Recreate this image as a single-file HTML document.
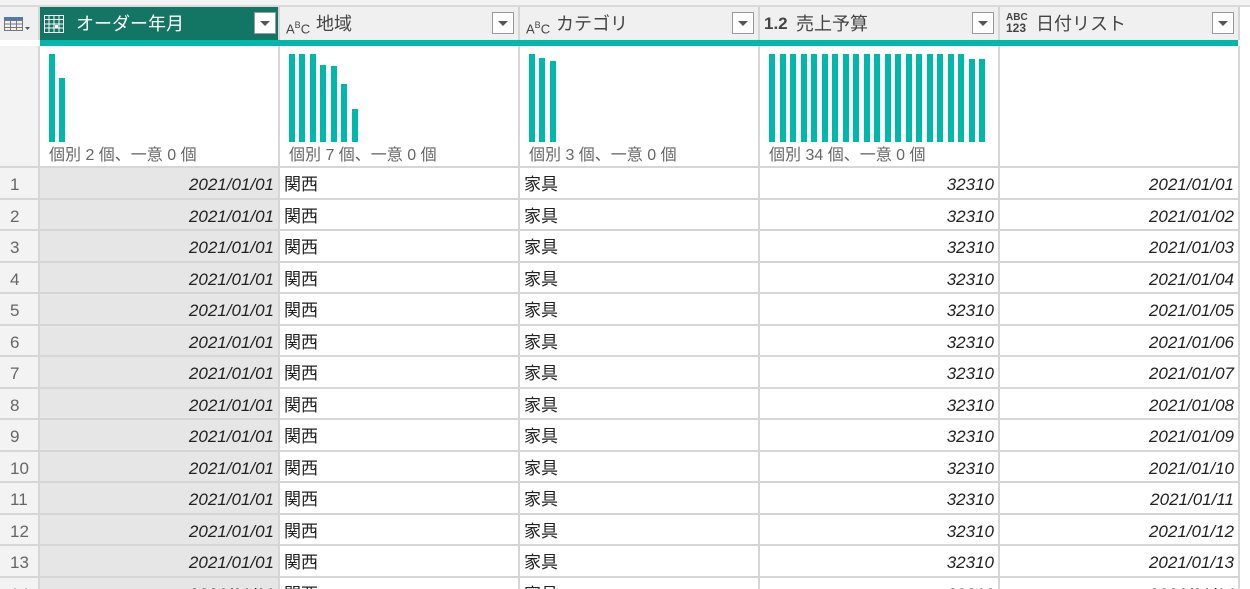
<!DOCTYPE html>
<html><head><meta charset="utf-8"><style>
*{box-sizing:border-box;margin:0;padding:0}
html,body{width:1250px;height:589px;overflow:hidden}
body{background:#fff;font-family:"Segoe UI","Liberation Sans","Noto Sans CJK JP",sans-serif;position:relative}
.top{position:absolute;left:0;top:0;width:1250px;height:7px;background:#f3f3f3;border-bottom:2px solid #dadada}
.hdr{position:absolute;top:7px;left:0;height:33px;display:flex;background:#f0f0f0}
.hdr>div{height:33px;border-right:2px solid #d6d6d6;position:relative;font-size:18px;color:#444;line-height:34px}
.teal{position:absolute;top:40px;height:6px;background:#00b8a9}
.stat{position:absolute;top:46px;height:122px;border-right:2px solid #d6d6d6;border-bottom:2px solid #d6d6d6;background:#fff}
.stat span{position:absolute;left:9px;bottom:1px;font-size:16px;color:#666}
.bar{position:absolute;bottom:24px;width:6px;background:#00b8a9}
.row{position:absolute;left:0;display:flex;height:31.5px;border-bottom:2px solid #d6d6d6;font-size:17px;color:#222}
.row>div{border-right:2px solid #d6d6d6;height:100%;line-height:33px;padding:0 4px;white-space:nowrap}
.c0{width:40px;background:#f3f3f3;color:#666;font-size:17px;padding-left:10px!important}
.c1{width:240px;background:#e6e6e6;text-align:right;font-style:italic}
.c2,.c3{width:240px;padding-left:4px!important}
.c4,.c5{width:240px;text-align:right;font-style:italic}
.dd{position:absolute;right:4px;top:5px;width:22px;height:22px;background:#fff;border:1px solid #999}
.dd:after{content:"";position:absolute;left:5px;top:8px;border:5px solid transparent;border-top:5px solid #555}
.ty{position:absolute;left:6px;top:0;font-size:13px}
.nm{position:absolute;left:36px}
</style></head><body>
<div class="top"></div>
<div class="hdr">
<div style="width:40px;background:#f0f0f0"><svg style="position:absolute;left:4px;top:10px" width="30" height="14"><rect x="0" y="0" width="19" height="3" fill="#4a7ab5"/><rect x="0.5" y="3.5" width="18" height="10" fill="none" stroke="#777"/><line x1="0" y1="7" x2="19" y2="7" stroke="#777"/><line x1="0" y1="10.5" x2="19" y2="10.5" stroke="#777"/><line x1="6.5" y1="3" x2="6.5" y2="14" stroke="#777"/><line x1="12.5" y1="3" x2="12.5" y2="14" stroke="#777"/><path d="M21 10h5l-2.5 3z" fill="#555"/></svg></div>
<div style="width:240px;background:#137563;color:#fff"><svg style="position:absolute;left:4px;top:8px" width="20" height="18"><rect x="0.5" y="0.5" width="19" height="17" fill="none" stroke="#fff"/><path d="M0 4.5h20M0 9h20M0 13h20M5 0v18M10 0v18M15 0v18" stroke="#fff"/><rect x="11" y="10" width="3" height="3" fill="#fff"/></svg><span class="nm">オーダー年月</span><div class="dd" style="right:2px"></div></div>
<div style="width:240px"><span class="ty" style="top:1px">A<sup style="font-size:9px">B</sup>C</span><span class="nm">地域</span><div class="dd"></div></div>
<div style="width:240px"><span class="ty" style="top:1px">A<sup style="font-size:9px">B</sup>C</span><span class="nm">カテゴリ</span><div class="dd"></div></div>
<div style="width:240px"><span class="ty" style="font-size:17px;font-weight:bold;left:4px">1.2</span><span class="nm">売上予算</span><div class="dd"></div></div>
<div style="width:240px"><span class="ty" style="font-size:10px;line-height:10px;top:6px;font-weight:bold">ABC<br><span style="font-size:12px">123</span></span><span class="nm">日付リスト</span><div class="dd"></div></div>
</div>
<div class="stat" style="left:0;width:40px;background:#f3f3f3"></div>
<div class="teal" style="left:40px;width:1198px"></div>
<div class="stat" style="left:40px;width:240px"><div class="bar" style="left:9px;height:88px"></div><div class="bar" style="left:19px;height:64px"></div><span>個別 2 個、一意 0 個</span></div>
<div class="stat" style="left:280px;width:240px">
<div class="bar" style="left:9px;height:88px"></div><div class="bar" style="left:19px;height:88px"></div><div class="bar" style="left:30px;height:88px"></div><div class="bar" style="left:40px;height:77px"></div><div class="bar" style="left:51px;height:76px"></div><div class="bar" style="left:61px;height:58px"></div><div class="bar" style="left:72px;height:33px"></div><span>個別 7 個、一意 0 個</span></div>
<div class="stat" style="left:520px;width:240px"><div class="bar" style="left:9px;height:88px"></div><div class="bar" style="left:19px;height:84px"></div><div class="bar" style="left:30px;height:81px"></div><span>個別 3 個、一意 0 個</span></div>
<div class="stat" style="left:760px;width:240px">
<div class="bar" style="left:9px;height:88px"></div><div class="bar" style="left:19.5px;height:88px"></div><div class="bar" style="left:30px;height:88px"></div><div class="bar" style="left:40.5px;height:88px"></div><div class="bar" style="left:51px;height:88px"></div><div class="bar" style="left:61.5px;height:88px"></div><div class="bar" style="left:72px;height:88px"></div><div class="bar" style="left:82.5px;height:88px"></div><div class="bar" style="left:93px;height:88px"></div><div class="bar" style="left:103.5px;height:88px"></div><div class="bar" style="left:114px;height:88px"></div><div class="bar" style="left:124.5px;height:88px"></div><div class="bar" style="left:135px;height:88px"></div><div class="bar" style="left:145.5px;height:88px"></div><div class="bar" style="left:156px;height:88px"></div><div class="bar" style="left:166.5px;height:88px"></div><div class="bar" style="left:177px;height:88px"></div><div class="bar" style="left:187.5px;height:88px"></div><div class="bar" style="left:198px;height:88px"></div><div class="bar" style="left:208.5px;height:83px"></div><div class="bar" style="left:219px;height:83px"></div><span>個別 34 個、一意 0 個</span></div>
<div class="stat" style="left:1000px;width:240px"></div>

<div class="row" style="top:168px"><div class="c0">1</div><div class="c1">2021/01/01</div><div class="c2">関西</div><div class="c3">家具</div><div class="c4">32310</div><div class="c5">2021/01/01</div></div>
<div class="row" style="top:199.5px"><div class="c0">2</div><div class="c1">2021/01/01</div><div class="c2">関西</div><div class="c3">家具</div><div class="c4">32310</div><div class="c5">2021/01/02</div></div>
<div class="row" style="top:231px"><div class="c0">3</div><div class="c1">2021/01/01</div><div class="c2">関西</div><div class="c3">家具</div><div class="c4">32310</div><div class="c5">2021/01/03</div></div>
<div class="row" style="top:262.5px"><div class="c0">4</div><div class="c1">2021/01/01</div><div class="c2">関西</div><div class="c3">家具</div><div class="c4">32310</div><div class="c5">2021/01/04</div></div>
<div class="row" style="top:294px"><div class="c0">5</div><div class="c1">2021/01/01</div><div class="c2">関西</div><div class="c3">家具</div><div class="c4">32310</div><div class="c5">2021/01/05</div></div>
<div class="row" style="top:325.5px"><div class="c0">6</div><div class="c1">2021/01/01</div><div class="c2">関西</div><div class="c3">家具</div><div class="c4">32310</div><div class="c5">2021/01/06</div></div>
<div class="row" style="top:357px"><div class="c0">7</div><div class="c1">2021/01/01</div><div class="c2">関西</div><div class="c3">家具</div><div class="c4">32310</div><div class="c5">2021/01/07</div></div>
<div class="row" style="top:388.5px"><div class="c0">8</div><div class="c1">2021/01/01</div><div class="c2">関西</div><div class="c3">家具</div><div class="c4">32310</div><div class="c5">2021/01/08</div></div>
<div class="row" style="top:420px"><div class="c0">9</div><div class="c1">2021/01/01</div><div class="c2">関西</div><div class="c3">家具</div><div class="c4">32310</div><div class="c5">2021/01/09</div></div>
<div class="row" style="top:451.5px"><div class="c0">10</div><div class="c1">2021/01/01</div><div class="c2">関西</div><div class="c3">家具</div><div class="c4">32310</div><div class="c5">2021/01/10</div></div>
<div class="row" style="top:483px"><div class="c0">11</div><div class="c1">2021/01/01</div><div class="c2">関西</div><div class="c3">家具</div><div class="c4">32310</div><div class="c5">2021/01/11</div></div>
<div class="row" style="top:514.5px"><div class="c0">12</div><div class="c1">2021/01/01</div><div class="c2">関西</div><div class="c3">家具</div><div class="c4">32310</div><div class="c5">2021/01/12</div></div>
<div class="row" style="top:546px"><div class="c0">13</div><div class="c1">2021/01/01</div><div class="c2">関西</div><div class="c3">家具</div><div class="c4">32310</div><div class="c5">2021/01/13</div></div>
<div class="row" style="top:577.5px"><div class="c0">14</div><div class="c1">2021/01/01</div><div class="c2">関西</div><div class="c3">家具</div><div class="c4">32310</div><div class="c5">2021/01/14</div></div>
</body></html>
